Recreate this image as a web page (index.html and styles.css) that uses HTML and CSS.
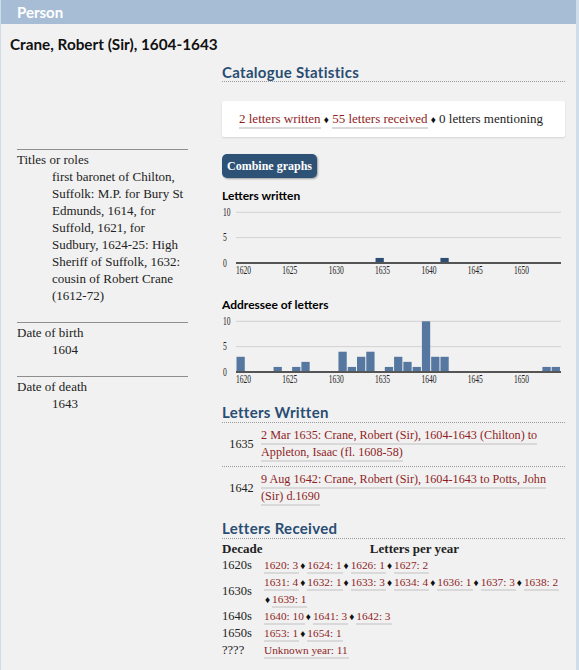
FILE: index.html
```html
<!DOCTYPE html>
<html lang="en">
<head>
    <meta charset="UTF-8">
    <meta name="viewport" content="width=device-width, initial-scale=1.0">
    <title>Person - Crane, Robert (Sir), 1604-1643</title>
    <link rel="stylesheet" href="styles.css">
</head>
<body>
<div class="page">

    <div class="topbar">Person</div>
    <h1 class="person-name">Crane, Robert (Sir), 1604-1643</h1>

    <div class="layout">
        <aside class="details">
            <dl class="field">
                <dt>Titles or roles</dt>
                <dd>first baronet of Chilton, Suffolk: M.P. for Bury St Edmunds, 1614, for Suffold, 1621, for Sudbury, 1624-25: High Sheriff of Suffolk, 1632: cousin of Robert Crane (1612-72)</dd>
            </dl>
            <dl class="field">
                <dt>Date of birth</dt>
                <dd>1604</dd>
            </dl>
            <dl class="field">
                <dt>Date of death</dt>
                <dd>1643</dd>
            </dl>
        </aside>

        <main class="content">
            <h2>Catalogue Statistics</h2>
            <div class="stats">
                <a href="#">2 letters written</a> <span class="sep">&#9830;</span> <a href="#">55 letters received</a> <span class="sep">&#9830;</span> 0 letters mentioning
            </div>

            <button class="combine" type="button">Combine graphs</button>

            <h3 class="chart-title">Letters written</h3>
            <svg id="chart-written" class="chart" width="343" height="72"></svg>

            <h3 class="chart-title chart-title-second">Addressee of letters</h3>
            <svg id="chart-received" class="chart" width="343" height="72"></svg>

            <h2 class="section">Letters Written</h2>
            <table class="written">
                <tr>
                    <td class="year">1635</td>
                    <td><a href="#">2 Mar 1635: Crane, Robert (Sir), 1604-1643 (Chilton) to Appleton, Isaac (fl. 1608-58)</a></td>
                </tr>
                <tr>
                    <td class="year">1642</td>
                    <td><a href="#">9 Aug 1642: Crane, Robert (Sir), 1604-1643 to Potts, John (Sir) d.1690</a></td>
                </tr>
            </table>

            <h2 class="section section-received">Letters Received</h2>
            <table class="received">
                <thead>
                    <tr>
                        <th class="decade">Decade</th>
                        <th class="per-year">Letters per year</th>
                    </tr>
                </thead>
                <tbody id="received-rows"></tbody>
            </table>
        </main>
    </div>
</div>

<script>
    // letters per year
    const written = { 1635: 1, 1642: 1 };
    const received = {
        1620: 3, 1624: 1, 1626: 1, 1627: 2, 1631: 4, 1632: 1, 1633: 3, 1634: 4,
        1636: 1, 1637: 3, 1638: 2, 1639: 1, 1640: 10, 1641: 3, 1642: 3, 1653: 1, 1654: 1
    };
    const receivedUnknown = 11;

    function drawChart(id, data, barClass) {
        const left = 14, right = 339, base = 58, unit = 5.07, step = 9.27;
        let out = '';

        // grid lines and y labels
        [10, 5].forEach(v => {
            const y = base - v * unit;
            out += '<line class="grid" x1="' + left + '" x2="' + right + '" y1="' + y + '" y2="' + y + '"/>';
        });
        [10, 5, 0].forEach(v => {
            const y = base - v * unit + 3.5;
            const w = v === 10 ? 7.5 : 3.8;
            out += '<text x="1" y="' + y + '" textLength="' + w + '" lengthAdjust="spacingAndGlyphs">' + v + '</text>';
        });

        // bars
        for (const year in data) {
            const x = left + (year - 1620) * step + 0.5;
            const h = data[year] * unit;
            out += '<rect class="' + barClass + '" x="' + x + '" y="' + (base - h) + '" width="' + (step - 1) + '" height="' + h + '"/>';
        }

        // axis and x labels
        out += '<line class="axis" x1="' + left + '" x2="' + right + '" y1="' + base + '" y2="' + base + '"/>';
        for (let year = 1620; year <= 1650; year += 5) {
            const x = left + (year - 1620) * step;
            out += '<text x="' + x + '" y="' + (base + 11) + '" textLength="15" lengthAdjust="spacingAndGlyphs">' + year + '</text>';
        }

        document.getElementById(id).innerHTML = out;
    }

    // one row per decade, years joined with diamonds
    function fillReceived() {
        const decades = {};
        for (const year in received) {
            const decade = year.slice(0, 3) + '0s';
            (decades[decade] = decades[decade] || []).push(year + ': ' + received[year]);
        }
        decades['????'] = ['Unknown year: ' + receivedUnknown];

        let rows = '';
        for (const decade in decades) {
            const items = decades[decade].map((text, i) => {
                const link = '<a href="#">' + text + '</a>';
                return i === 0
                    ? '<span class="item">' + link + '</span>'
                    : '<wbr><span class="item"><span class="sep">&#9830;</span>' + link + '</span>';
            });
            rows += '<tr><td class="decade">' + decade + '</td><td>' + items.join('') + '</td></tr>';
        }
        document.getElementById('received-rows').innerHTML = rows;
    }

    drawChart('chart-written', written, 'col-dark');
    drawChart('chart-received', received, 'col');
    fillReceived();
</script>
</body>
</html>
```

FILE: styles.css
```css
/* General Styles */
body {
    margin: 0;
    background: #cfdcea;
    font-family: 'Liberation Serif', serif;
    font-size: 13px;
    color: #222;
}

a {
    color: #8f1e1e;
    text-decoration: none;
    border-bottom: 2px solid #d9d9d9;
    padding-bottom: 1px;
}

.sep {
    font-size: 10px;
    color: #111;
}

.page {
    width: 575px;
    min-height: 670px;
    margin-left: 1px;
    background: #f1f1f1;
}

.topbar {
    height: 24px;
    line-height: 24px;
    padding-left: 16px;
    background: #a7bdd6;
    color: #fff;
    font-family: 'Lato', sans-serif;
    font-weight: bold;
    font-size: 15px;
}

.person-name {
    margin: 0;
    padding: 10px 9px 6px;
    line-height: 20px;
    font-family: 'Lato', sans-serif;
    font-size: 15.3px;
    color: #111;
}

/* Two columns */
.layout {
    display: grid;
    grid-template-columns: 221px 343px;
}

/* Person details */
.details {
    padding: 89px 0 0 16px;
}

.field {
    width: 171px;
    margin: 0 0 18px;
    padding-top: 1px;
    border-top: 1px solid #8e8e8e;
}

.field dt {
    line-height: 17px;
}

.field dd {
    margin: 0 0 0 35px;
    line-height: 17px;
}

/* Main content */
.content h2 {
    margin: 3px 0 0;
    line-height: 18px;
    font-family: 'Lato', sans-serif;
    font-size: 15px;
    letter-spacing: 0.3px;
    color: #2a4d72;
    border-bottom: 1px dotted #9a9a9a;
}

.stats {
    margin-top: 19px;
    padding: 8px 17px;
    line-height: 19px;
    background: #fff;
    border-radius: 2px;
    box-shadow: 0 1px 2px rgba(0, 0, 0, 0.12);
}

.combine {
    display: block;
    margin-top: 17px;
    height: 24px;
    padding: 0 5px;
    background: #2e5276;
    color: #fff;
    border: none;
    border-radius: 5px;
    box-shadow: 1px 1px 2px rgba(0, 0, 0, 0.35);
    font-family: 'Liberation Serif', serif;
    font-weight: bold;
    font-size: 12px;
    cursor: pointer;
}

.chart-title {
    margin: 11px 0 0;
    line-height: 14px;
    font-family: 'Lato', sans-serif;
    font-size: 12px;
    color: #000;
}

.chart-title-second {
    margin-top: 21px;
}

/* Bar charts */
.chart {
    display: block;
    margin-top: 2px;
}

.chart .grid {
    stroke: #d2d2d2;
    stroke-width: 1;
}

.chart .axis {
    stroke: #555;
    stroke-width: 2;
}

.chart .col {
    fill: #56779f;
}

.chart .col-dark {
    fill: #2d4d73;
}

.chart text {
    font-family: 'Liberation Serif', serif;
    font-size: 12.5px;
    fill: #222;
}

.content h2.section {
    margin-top: 17px;
    padding-bottom: 1px;
}

.content h2.section-received {
    margin-top: 9px;
}

/* Letters written */
.written {
    width: 100%;
    border-collapse: collapse;
    font-size: 12.2px;
}

.written td {
    padding: 4px 0 5px;
    line-height: 17px;
    vertical-align: middle;
}

.written tr + tr td {
    border-top: 1px dotted #9a9a9a;
}

.written .year {
    width: 39px;
    text-align: center;
}

/* Letters received */
.received {
    width: 100%;
    border-collapse: collapse;
    margin-top: 1px;
}

.received th,
.received td {
    padding: 0;
    line-height: 17px;
    text-align: left;
    vertical-align: middle;
}

.received td {
    font-size: 11.3px;
}

.received td.decade {
    font-size: 12.5px;
}

.received th.per-year {
    text-align: center;
}

.received .decade {
    width: 42px;
}

.received a {
    padding-right: 1px;
}

.received .sep {
    margin: 0 2px 0 1px;
}

.item {
    white-space: nowrap;
}
```
